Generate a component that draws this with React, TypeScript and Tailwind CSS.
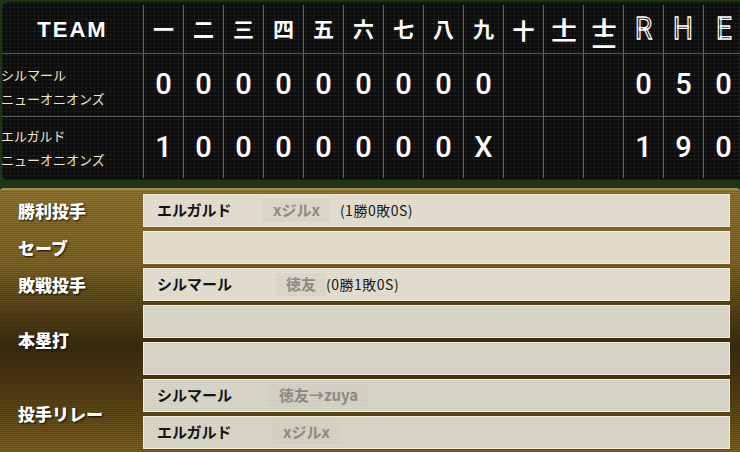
import React from "react";

const innings = ["一", "二", "三", "四", "五", "六", "七", "八", "九"];

const teams = [
  {
    name: "シルマール",
    sub: "ニューオニオンズ",
    scores: ["0", "0", "0", "0", "0", "0", "0", "0", "0", "", "", ""],
    rhe: ["0", "5", "0"],
  },
  {
    name: "エルガルド",
    sub: "ニューオニオンズ",
    scores: ["1", "0", "0", "0", "0", "0", "0", "0", "X", "", "", ""],
    rhe: ["1", "9", "0"],
  },
];

const jp = "font-['Noto_Sans_CJK_JP',sans-serif]";

function HeaderCell({ children }: { children: React.ReactNode }) {
  return (
    <div className="flex items-center justify-center border-l border-[#5e5e5e] text-white">
      {children}
    </div>
  );
}

// 十一 / 十二 stacked vertically as one text run
function Extra({ text }: { text: string }) {
  return (
    <span
      className={`${jp} font-bold text-[25px] leading-none text-white [writing-mode:vertical-rl] [text-orientation:upright] tracking-[-8px] scale-y-[0.78] translate-y-[2px]`}
    >
      {text}
    </span>
  );
}

function Scoreboard() {
  return (
    <div className="bg-[#1d3616] pl-[2px] pt-[2px] pb-[8px] rounded-[6px]">
      <div className="rounded-l-[6px] bg-[#0b0b0b] bg-[image:repeating-linear-gradient(90deg,#1a1a1a_0_1px,transparent_1px_4px),repeating-linear-gradient(0deg,#1a1a1a_0_1px,transparent_1px_4px)] pt-[3px] pb-[2px]">
        <div className="grid grid-cols-[141px_repeat(15,40px)] h-[49px] border-b border-[#5a5a5a]">
          <div className="flex items-center justify-center font-['Liberation_Sans',sans-serif] font-bold text-[22px] tracking-[2px] text-white">
            TEAM
          </div>
          {innings.map((k) => (
            <HeaderCell key={k}>
              <span className={`${jp} font-bold text-[21px]`}>{k}</span>
            </HeaderCell>
          ))}
          <HeaderCell>
            <span className={`${jp} font-bold text-[22px]`}>十</span>
          </HeaderCell>
          <HeaderCell>
            <Extra text="十一" />
          </HeaderCell>
          <HeaderCell>
            <Extra text="十二" />
          </HeaderCell>
          {["R", "H", "E"].map((c) => (
            <HeaderCell key={c}>
              <span className="font-['Roboto',sans-serif] text-[31px] text-transparent [-webkit-text-stroke:1.3px_#ffffff] scale-x-90">
                {c}
              </span>
            </HeaderCell>
          ))}
        </div>
        {teams.map((t, i) => (
          <div
            key={t.name}
            className={`grid grid-cols-[141px_repeat(15,40px)] ${
              i === 0 ? "h-[63px] border-b border-[#5a5a5a]" : "h-[61px]"
            }`}
          >
            <div
              className={`flex flex-col justify-center ${jp} text-[13px] leading-[24px] text-[#efe6cc] ${
                i === 0 ? "pt-[4px]" : "pt-0"
              }`}
            >
              <span className="-ml-[1px]">{t.name}</span>
              <span className="-ml-[1px]">{t.sub}</span>
            </div>
            {[...t.scores, ...t.rhe].map((s, j) => (
              <div
                key={j}
                className="flex items-center justify-center border-l border-[#5e5e5e] font-['Roboto',sans-serif] font-medium text-[29px] text-white"
              >
                {s}
              </div>
            ))}
          </div>
        ))}
      </div>
    </div>
  );
}

type Cell = {
  team?: string;
  teamW?: string;
  pitcher?: string;
  stats?: string;
  statsGap?: string;
  tone: "light" | "grey";
};

const groups: { label: string; cells: Cell[] }[] = [
  {
    label: "勝利投手",
    cells: [
      { team: "エルガルド", teamW: "w-[106px]", pitcher: "xジルx", stats: "(1勝0敗0S)", statsGap: "ml-[10px]", tone: "light" },
    ],
  },
  { label: "セーブ", cells: [{ tone: "light" }] },
  {
    label: "敗戦投手",
    cells: [
      { team: "シルマール", teamW: "w-[119px]", pitcher: "徳友", stats: "(0勝1敗0S)", statsGap: "ml-[0px]", tone: "light" },
    ],
  },
  { label: "本塁打", cells: [{ tone: "grey" }, { tone: "grey" }] },
  {
    label: "投手リレー",
    cells: [
      { team: "シルマール", teamW: "w-[112px]", pitcher: "徳友→zuya", tone: "grey" },
      { team: "エルガルド", teamW: "w-[116px]", pitcher: "xジルx", tone: "grey" },
    ],
  },
];

function ResultCell({ c }: { c: Cell }) {
  const bg =
    c.tone === "light"
      ? "bg-[image:repeating-linear-gradient(0deg,#dcd7c7_0_1px,#e4dfd0_1px_2px)]"
      : "bg-[image:repeating-linear-gradient(0deg,#d1cec2_0_1px,#d9d6ca_1px_2px)]";
  return (
    <div className={`h-[33px] border border-[#f1ecdd] ${bg} flex items-center pl-[13px] ${jp}`}>
      {c.team && (
        <span className={`${c.teamW} shrink-0 font-bold text-[15px] text-[#141414]`}>{c.team}</span>
      )}
      {c.pitcher && (
        <span className="px-[10px] bg-[#cfcbbd]/35 font-bold text-[15px] text-[#8c8a84]">
          {c.pitcher}
        </span>
      )}
      {c.stats && (
        <span className={`${c.statsGap} text-[14px] tracking-[0.5px] text-[#161616]`}>{c.stats}</span>
      )}
    </div>
  );
}

function Results() {
  return (
    <div className="rounded-t-[4px] border-t-2 border-[#a48c4c] bg-[image:repeating-linear-gradient(0deg,rgba(0,0,0,0.16)_0_1px,transparent_1px_2px),linear-gradient(180deg,#8e7435_0%,#7d6529_28%,#4f3e18_48%,#3a2d11_60%,#523e15_78%,#7a5f24_100%)] pt-[4px] pb-[3px] flex flex-col gap-[4px]">
      {groups.map((g) => (
        <div key={g.label} className="flex">
          <div
            className={`w-[143px] shrink-0 flex items-center pl-[18px] ${jp} font-black text-[17px] text-white [text-shadow:1px_1px_2px_rgba(0,0,0,0.85)]`}
          >
            {g.label}
          </div>
          <div className="w-[587px] flex flex-col gap-[4px]">
            {g.cells.map((c, i) => (
              <ResultCell key={i} c={c} />
            ))}
          </div>
        </div>
      ))}
    </div>
  );
}

export default function App() {
  return (
    <div className="w-[740px] h-[452px] overflow-hidden bg-[#1d3616]">
      <Scoreboard />
      <Results />
    </div>
  );
}
